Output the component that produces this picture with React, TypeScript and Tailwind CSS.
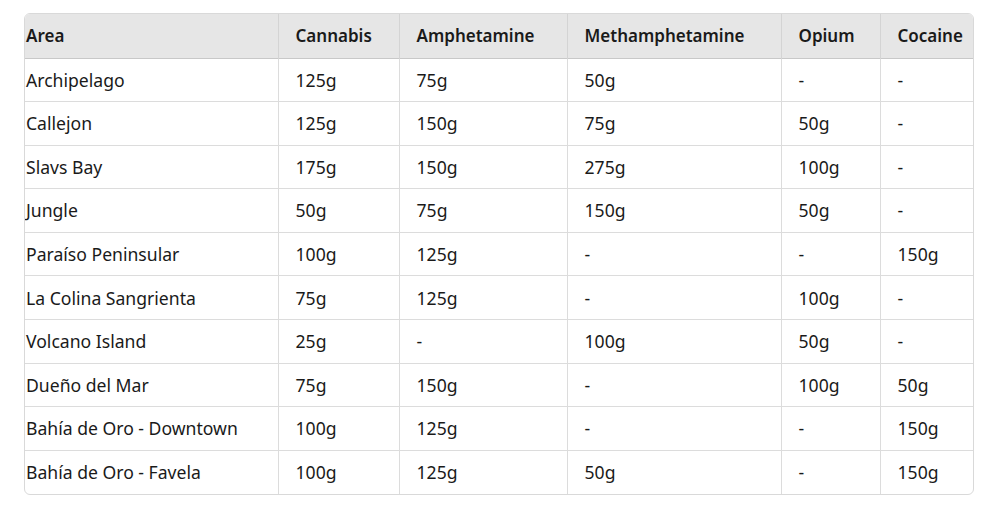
const headers = ["Area", "Cannabis", "Amphetamine", "Methamphetamine", "Opium", "Cocaine"]

const rows = [
  ["Archipelago", "125g", "75g", "50g", "-", "-"],
  ["Callejon", "125g", "150g", "75g", "50g", "-"],
  ["Slavs Bay", "175g", "150g", "275g", "100g", "-"],
  ["Jungle", "50g", "75g", "150g", "50g", "-"],
  ["Paraíso Peninsular", "100g", "125g", "-", "-", "150g"],
  ["La Colina Sangrienta", "75g", "125g", "-", "100g", "-"],
  ["Volcano Island", "25g", "-", "100g", "50g", "-"],
  ["Dueño del Mar", "75g", "150g", "-", "100g", "50g"],
  ["Bahía de Oro - Downtown", "100g", "125g", "-", "-", "150g"],
  ["Bahía de Oro - Favela", "100g", "125g", "50g", "-", "150g"],
]

const widths = ["w-[253px]", "w-[121px]", "w-[168px]", "w-[214px]", "w-[99px]", "w-[95px]"]

export default function App() {
  return (
    <div className="w-[990px] h-[510px] bg-white pt-[13px] pl-[24px] font-['Noto_Sans','Open_Sans',sans-serif] text-[17.6px] text-[#1a1a1a]">
      <div className="w-[950px] border border-[#d9d9d9] rounded-[6px] overflow-hidden">
        <table className="w-full border-collapse table-fixed">
          <thead>
            <tr className="h-[44px] bg-[#e6e6e6] border-b border-[#c8c8c8]">
              {headers.map((h, i) => (
                <th
                  key={h}
                  className={`${widths[i]} text-left font-semibold text-[17px] ${i === 0 ? "pl-[1px]" : "pl-[17px] border-l border-[#d4d4d4]"}`}
                >
                  {h}
                </th>
              ))}
            </tr>
          </thead>
          <tbody>
            {rows.map((r, ri) => (
              <tr key={ri} className={`h-[43.6px] ${ri > 0 ? "border-t border-[#dcdcdc]" : ""}`}>
                {r.map((c, i) => (
                  <td
                    key={i}
                    className={`text-left ${i === 0 ? "pl-[1px]" : "pl-[17px] border-l border-[#dcdcdc]"}`}
                  >
                    {c}
                  </td>
                ))}
              </tr>
            ))}
          </tbody>
        </table>
      </div>
    </div>
  )
}
